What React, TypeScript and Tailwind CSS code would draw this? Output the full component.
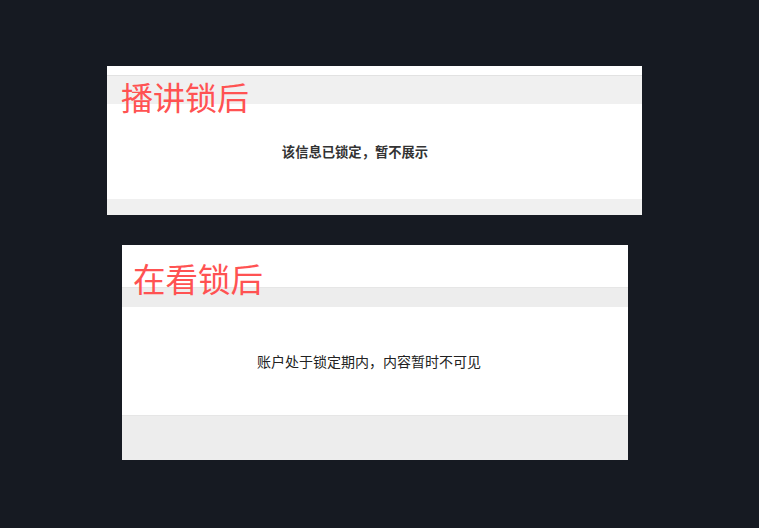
import React from 'react';

const cjk = { fontFamily: '"Noto Sans CJK SC", "Noto Sans", sans-serif' };

export default function App() {
  return (
    <div className="min-h-screen bg-[#161a22] pt-[66px]" style={cjk}>
      {/* 播讲锁后 */}
      <div className="relative ml-[107px] w-[535px] bg-white">
        <div className="h-[10px] border-b border-[#e2e2e2]" />
        <div className="h-[28px] bg-[#f0f0f0]" />
        <div className="flex h-[95px] items-center justify-center pr-[39px] text-[13.3px] font-bold text-[#333]">
          该信息已锁定，暂不展示
        </div>
        <div className="h-[16px] bg-[#f0f0f0]" />
        <span className="absolute left-[14px] top-[14px] text-[32px] leading-none text-[#ff5252]">
          播讲锁后
        </span>
      </div>

      {/* 在看锁后 */}
      <div className="relative mt-[30px] ml-[122px] w-[506px] bg-white">
        <div className="h-[42px]" />
        <div className="h-[20px] border-t border-[#e6e6e6] bg-[#ededed]" />
        <div className="flex h-[108px] items-center justify-center pr-[12px] text-[14px] text-[#222]">
          账户处于锁定期内，内容暂时不可见
        </div>
        <div className="h-[45px] border-t border-[#e6e6e6] bg-[#ededed]" />
        <span className="absolute left-[11px] top-[17px] text-[32.5px] leading-none text-[#ff5252]">
          在看锁后
        </span>
      </div>
    </div>
  );
}
